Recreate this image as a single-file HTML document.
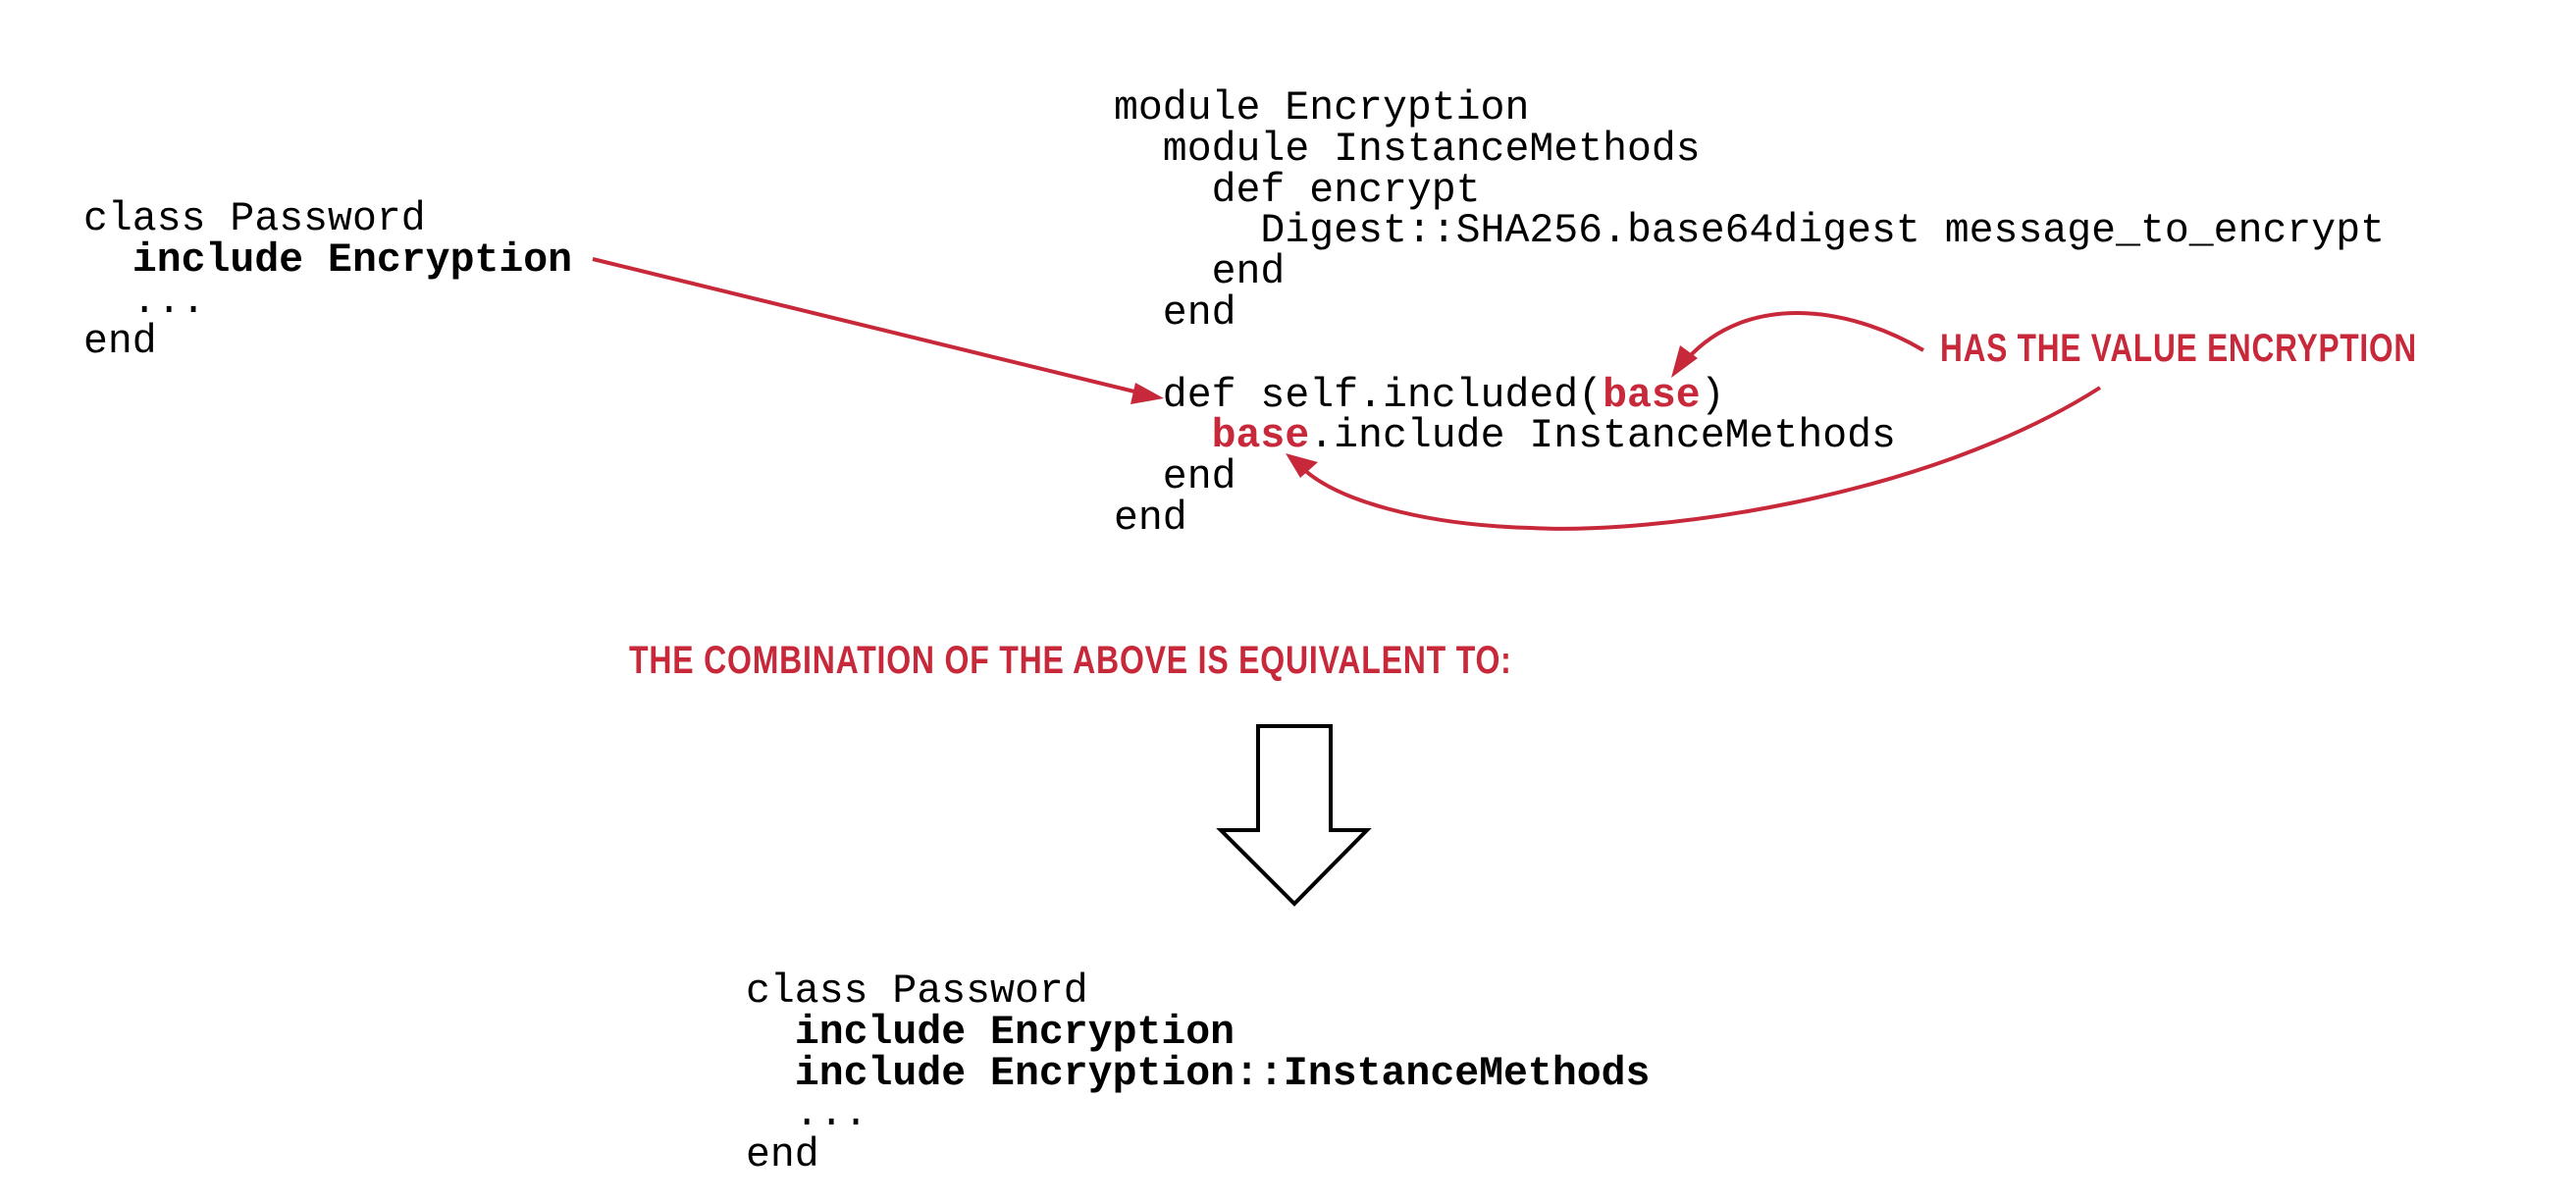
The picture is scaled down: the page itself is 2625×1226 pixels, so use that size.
<!DOCTYPE html>
<html><head><meta charset="utf-8"><style>
html,body{margin:0;padding:0;background:#fff;width:2625px;height:1226px;overflow:hidden;position:relative}
pre{position:absolute;margin:0;font-family:"Liberation Mono",monospace;font-size:41.5px;line-height:41.8px;color:#000}
b{font-weight:bold}
.r{color:#c8293a;font-weight:bold}
.lbl{position:absolute;font-family:"Liberation Sans",sans-serif;font-weight:bold;color:#c8293a;font-size:40px;white-space:nowrap;transform-origin:0 0;letter-spacing:1px}
</style></head><body>
<pre style="left:85px;top:203px">class Password
  <b>include Encryption</b>
  ...
end</pre>
<pre style="left:1135px;top:90px">module Encryption
  module InstanceMethods
    def encrypt
      Digest::SHA256.base64digest message_to_encrypt
    end
  end

  def self.included(<span class="r">base</span>)
    <span class="r">base</span>.include InstanceMethods
  end
end</pre>
<pre style="left:760px;top:990px">class Password
  <b>include Encryption</b>
  <b>include Encryption::InstanceMethods</b>
  ...
end</pre>
<div class="lbl" style="left:1977px;top:333px;transform:scaleX(0.79)">HAS THE VALUE ENCRYPTION</div>
<div class="lbl" style="left:641px;top:651px;transform:scaleX(0.80)">THE COMBINATION OF THE ABOVE IS EQUIVALENT TO:</div>
<svg width="2625" height="1226" style="position:absolute;left:0;top:0">
<g stroke="#c8293a" stroke-width="4" fill="none">
<path d="M604 264 L1160 400"/>
<path d="M1960 357 C1880 310 1780 300 1720 365"/>
<path d="M2140 395 C1960 510 1680 545 1560 538 C1450 535 1360 510 1325 475"/>
</g>
<g fill="#c8293a">
<polygon points="1186,406 1152,412 1157,390"/>
<polygon points="1703,385 1712,352 1730,365"/>
<polygon points="1310,462 1343,471 1325,487"/>
</g>
<polygon points="1282,740 1356,740 1356,846 1393,846 1319,921 1244,846 1282,846" fill="none" stroke="#000" stroke-width="4"/>
</svg>
</body></html>
